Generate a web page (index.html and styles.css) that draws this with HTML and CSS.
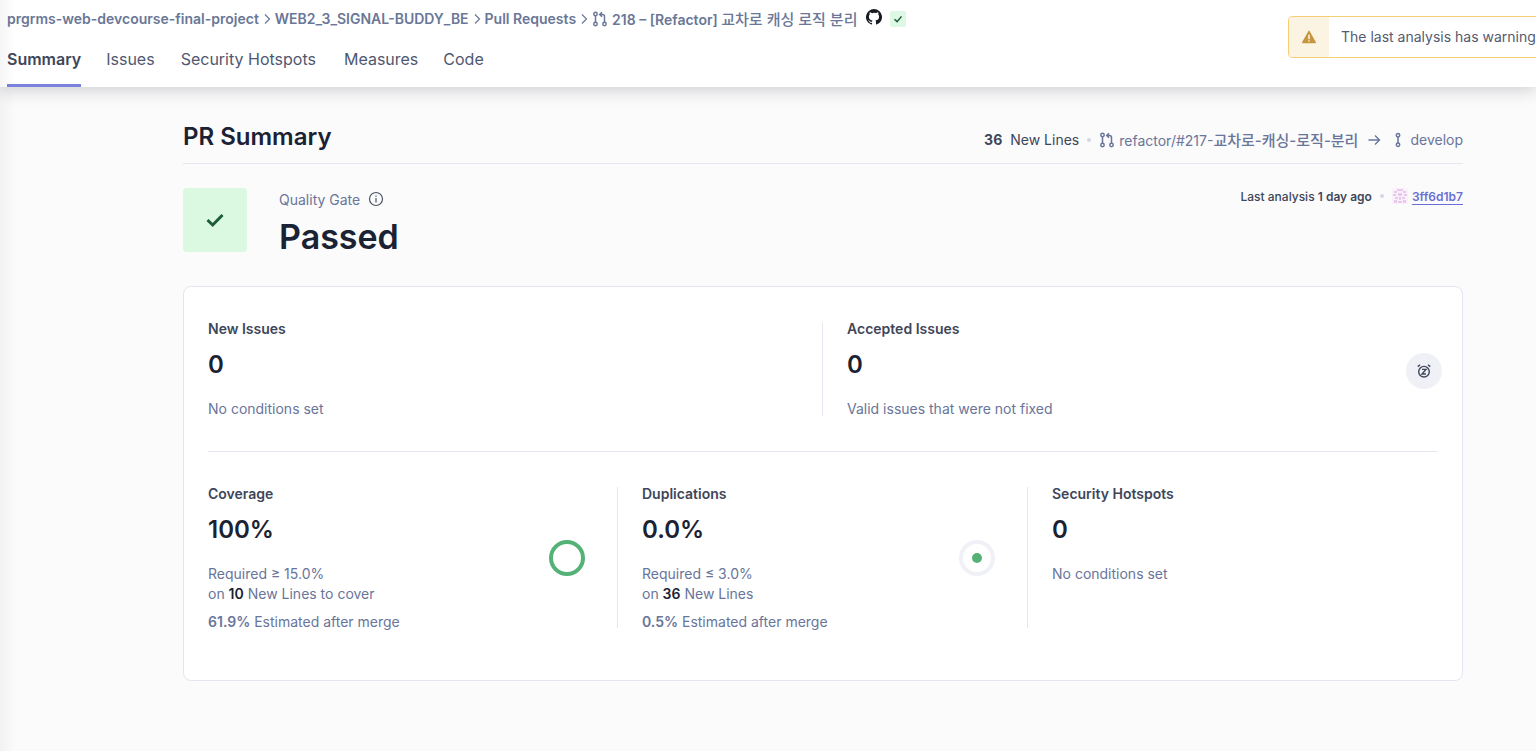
FILE: index.html
```html
<!DOCTYPE html>
<html lang="en">
<head>
<meta charset="utf-8">
<title>PR Summary</title>
<link rel="stylesheet" href="styles.css">
</head>
<body>
<header class="topbar">
  <nav class="crumbs">
    <span>prgrms-web-devcourse-final-project</span>
    <svg class="chev" viewBox="0 0 16 16"><path d="M6 3.5 10.5 8 6 12.5" fill="none" stroke="currentColor" stroke-width="1.2"/></svg>
    <span>WEB2_3_SIGNAL-BUDDY_BE</span>
    <svg class="chev" viewBox="0 0 16 16"><path d="M6 3.5 10.5 8 6 12.5" fill="none" stroke="currentColor" stroke-width="1.2"/></svg>
    <span>Pull Requests</span>
    <svg class="chev" viewBox="0 0 16 16"><path d="M6 3.5 10.5 8 6 12.5" fill="none" stroke="currentColor" stroke-width="1.2"/></svg>
    <svg class="pr" viewBox="0 0 16 16"><g fill="none" stroke="currentColor" stroke-width="1.5"><circle cx="3.5" cy="3" r="1.7"/><circle cx="3.5" cy="13" r="1.7"/><circle cx="12.5" cy="13" r="1.7"/><path d="M3.5 4.7v6.6M12.5 11.3V5.5a2 2 0 0 0-2-2H8M10 1.2 7.7 3.5 10 5.8"/></g></svg>
    <span>218 – [Refactor] <span class="ko">교차로 캐싱 로직 분리</span></span>
    <svg class="gh" viewBox="0 0 16 16"><path fill="#161b22" d="M8 0a8 8 0 0 0-2.53 15.59c.4.07.55-.17.55-.38v-1.34c-2.23.48-2.7-1.07-2.7-1.07-.36-.93-.89-1.17-.89-1.17-.73-.5.05-.49.05-.49.8.06 1.23.83 1.23.83.71 1.22 1.87.87 2.33.66.07-.52.28-.87.5-1.07-1.78-.2-3.64-.89-3.64-3.95 0-.87.31-1.59.82-2.15-.08-.2-.36-1.02.08-2.12 0 0 .67-.21 2.2.82A7.7 7.7 0 0 1 8 3.86c.68 0 1.36.09 2 .27 1.53-1.04 2.2-.82 2.2-.82.44 1.1.16 1.92.08 2.12.51.56.82 1.27.82 2.15 0 3.07-1.87 3.75-3.65 3.95.29.25.54.73.54 1.48v2.2c0 .21.15.46.55.38A8 8 0 0 0 8 0Z"/></svg>
    <span class="okbadge"><svg viewBox="0 0 16 16"><path d="M4 8.3 7 11l5-6" fill="none" stroke="#1d5c39" stroke-width="1.7"/></svg></span>
  </nav>
  <nav class="tabs">
    <a class="tab active">Summary</a>
    <a class="tab">Issues</a>
    <a class="tab">Security Hotspots</a>
    <a class="tab">Measures</a>
    <a class="tab">Code</a>
  </nav>
  <div class="warning">
    <span class="warn-ico"><svg viewBox="0 0 16 16"><path fill="#c6963f" stroke="#c6963f" stroke-width="1.2" stroke-linejoin="round" d="M8 2.2 14.4 13.6H1.6Z"/><path d="M8 5.8v4.4M8 11.2v1.4" stroke="#fbf4e2" stroke-width="1.6"/></svg></span>
    <span class="warn-text">The last analysis has warnings</span>
  </div>
</header>
<main class="page">
  <div class="head">
    <h1>PR Summary</h1>
    <div class="head-meta">
      <b>36</b><span class="new-lines">New Lines</span><i class="dot"></i>
      <svg class="pr" viewBox="0 0 16 16"><g fill="none" stroke="currentColor" stroke-width="1.5"><circle cx="3.5" cy="3" r="1.7"/><circle cx="3.5" cy="13" r="1.7"/><circle cx="12.5" cy="13" r="1.7"/><path d="M3.5 4.7v6.6M12.5 11.3V5.5a2 2 0 0 0-2-2H8M10 1.2 7.7 3.5 10 5.8"/></g></svg>
      <span>refactor/#217-<span class="ko">교차로-캐싱-로직-분리</span></span>
      <svg class="arrow" viewBox="0 0 16 16"><path d="M2.5 8h11M9 3.5 13.5 8 9 12.5" fill="none" stroke="currentColor" stroke-width="1.4"/></svg>
      <svg class="branch" viewBox="0 0 16 16"><g fill="none" stroke="currentColor" stroke-width="1.5"><circle cx="8" cy="3.2" r="1.7"/><circle cx="8" cy="12.8" r="1.7"/><path d="M8 4.9v6.2"/></g></svg>
      <span>develop</span>
    </div>
  </div>
  <section class="gate">
    <div class="gate-box"><svg viewBox="0 0 24 24"><path d="M4.5 12 9.7 17 19.5 7" fill="none" stroke="#1d5c39" stroke-width="3"/></svg></div>
    <div class="gate-text">
      <div class="gate-label">Quality Gate <svg viewBox="0 0 16 16"><g fill="none" stroke="#4b5563" stroke-width="1.2"><circle cx="8" cy="8" r="6.5"/><path d="M8 7v4.5M8 4.4v1.3"/></g></svg></div>
      <div class="gate-value">Passed</div>
    </div>
    <div class="analysis">
      <span>Last analysis <b>1 day ago</b></span><i class="dot"></i>
      <svg class="avatar" viewBox="0 0 16 16"><rect width="16" height="16" fill="#fbf1fb"/><path d="M5 1h6v2H5zM2 3h3v2H2zM11 3h3v2h-3zM1 6h3v2H1zM12 6h3v2h-3zM6 5h4v3H6zM3 9h3v2H3zM10 9h3v2h-3zM7 9h2v3H7zM2 12h3v3H2zM11 12h3v3h-3zM6 13h4v2H6z" fill="#e9c8ee"/></svg>
      <a>3ff6d1b7</a>
    </div>
  </section>
  <section class="card">
    <div class="row row-top">
      <div class="cell">
        <h2>New Issues</h2>
        <div class="num">0</div>
        <p>No conditions set</p>
      </div>
      <div class="cell cell-accepted">
        <h2>Accepted Issues</h2>
        <div class="num">0</div>
        <p>Valid issues that were not fixed</p>
        <span class="snooze"><svg viewBox="0 0 16 16"><g fill="none" stroke="#3e4659" stroke-width="1.4"><circle cx="8" cy="8.7" r="5.3"/><path d="M1.8 3.6 4 1.7M14.2 3.6 12 1.7M6 6.4h4L6 11h4"/></g></svg></span>
      </div>
    </div>
    <div class="row row-bottom">
      <div class="cell">
        <h2>Coverage</h2>
        <div class="num">100%</div>
        <p>Required ≥ 15.0%</p>
        <p>on <b>10</b> New Lines to cover</p>
        <p class="est"><em>61.9%</em> Estimated after merge</p>
        <svg class="gauge" viewBox="0 0 36 36"><circle cx="18" cy="18" r="16" fill="none" stroke="#55b276" stroke-width="4"/></svg>
      </div>
      <div class="cell">
        <h2>Duplications</h2>
        <div class="num">0.0%</div>
        <p>Required ≤ 3.0%</p>
        <p>on <b>36</b> New Lines</p>
        <p class="est"><em>0.5%</em> Estimated after merge</p>
        <svg class="gauge" viewBox="0 0 36 36"><circle cx="18" cy="18" r="16" fill="none" stroke="#f0f1f6" stroke-width="4"/><circle cx="18" cy="18" r="5" fill="#55b276"/></svg>
      </div>
      <div class="cell">
        <h2>Security Hotspots</h2>
        <div class="num">0</div>
        <p>No conditions set</p>
      </div>
    </div>
  </section>
</main>
</body>
</html>
```
FILE: styles.css
```css
* { box-sizing: border-box; }
html, body { margin: 0; height: 751px; overflow: hidden; }
body { background: #fbfbfb; font-family: Inter, "Noto Sans CJK KR", sans-serif; color: #1f2937; font-size: 14px; }
body::before { content: ""; position: absolute; left: 0; top: 0; bottom: 0; width: 16px; background: linear-gradient(to right, rgba(20,25,40,.04), rgba(20,25,40,0)); z-index: 2; pointer-events: none; }
svg { display: block; flex: none; }
.ko { font-size: 15px; font-weight: 500; }
.topbar { position: relative; height: 87px; background: #fff; box-shadow: 0 3px 16px rgba(20,25,40,.2); padding: 9px 7px 0; overflow: hidden; }
.crumbs { display: flex; align-items: center; height: 18px; color: #6a7797; font-weight: 600; font-size: 14px; white-space: nowrap; }
.crumbs .chev { width: 16px; height: 16px; margin-top: 1px; }
.crumbs .pr { width: 16px; height: 16px; margin: 2px 4px 0 0; }
.gh { width: 16px; height: 16px; margin: -2px 0 0 9px; }
.okbadge { width: 16px; height: 16px; background: #dff7e5; border-radius: 2px; margin: 2px 0 0 8px; padding: 1px; }
.okbadge svg { width: 14px; height: 14px; }
.tabs { display: flex; gap: 26px; margin-top: 13px; }
.tab { height: 47px; padding-top: 9px; font-size: 16px; color: #4f5870; border-bottom: 3px solid transparent; }
.tab:nth-child(2) { margin-left: -1px; }
.tab:nth-child(4) { margin-left: 2px; }
.tab:nth-child(5) { margin-left: -1px; }
.tab.active { font-weight: 600; color: #3e4659; border-bottom-color: #7b82dc; }
.warning { position: absolute; left: 1288px; top: 16px; width: 300px; height: 42px; display: flex; background: #fff; border: 1px solid #f5cf74; border-radius: 4px; }
.warn-ico { width: 40px; background: #fbf4e2; display: flex; align-items: center; justify-content: center; border-radius: 3px 0 0 3px; }
.warn-ico svg { width: 16px; height: 16px; }
.warn-text { flex: 1; padding-left: 12px; line-height: 40px; color: #555a70; }
.page { width: 1280px; margin-left: 183px; }
.head { display: flex; justify-content: space-between; align-items: center; height: 77px; padding-top: 23px; border-bottom: 1px solid #e6e7ee; }
h1 { margin: 0; font-size: 24px; font-weight: 600; color: #1a2233; }
.head-meta { display: flex; align-items: center; color: #69759a; font-size: 14px; padding-top: 6px; }
.head-meta b { color: #3e4659; margin-right: 8px; font-weight: 700; }
.head-meta .new-lines { color: #3e4659; }
.dot { width: 4px; height: 4px; border-radius: 50%; background: #d3d6e2; margin: 0 8px; display: block; }
.head-meta svg { width: 16px; height: 16px; }
.head-meta .pr { margin-right: 4px; }
.head-meta .arrow { margin: 0 8px; }
.head-meta .branch { margin-right: 4px; }
.gate { display: flex; margin-top: 24px; height: 64px; position: relative; }
.gate-box { width: 64px; height: 64px; background: #dbf8e1; border-radius: 4px; display: flex; align-items: center; justify-content: center; }
.gate-box svg { width: 24px; height: 24px; }
.gate-text { margin-left: 32px; }
.gate-label { display: flex; align-items: center; gap: 8px; color: #69759a; height: 24px; font-size: 14px; margin-top: -1px; }
.gate-label svg { width: 16px; height: 16px; }
.gate-value { font-size: 34px; font-weight: 600; color: #1a2233; line-height: 44px; margin-top: 4px; }
.analysis { margin-left: auto; display: flex; align-items: center; height: 18px; font-size: 12px; font-weight: 500; color: #3e4659; margin-top: -1px; }
.analysis b { font-weight: 600; }
.analysis .dot { margin: 0 8px; }
.avatar { width: 16px; height: 16px; margin-right: 4px; }
.analysis a { color: #6a6fd4; text-decoration: underline; text-underline-offset: 3px; font-weight: 600; }
.card { margin-top: 34px; height: 395px; background: #fff; border: 1px solid #e6e4f2; border-radius: 8px; padding: 0 24px; }
.row { display: grid; }
.row-top { grid-template-columns: 614px 616px; height: 165px; padding-top: 35px; border-bottom: 1px solid #e6e7ee; }
.row-bottom { grid-template-columns: 409px 410px 411px; padding-top: 35px; }
.cell { position: relative; }
.row-top .cell { height: 94px; }
.row-bottom .cell { height: 141px; }
.cell + .cell { border-left: 1px solid #e6e7ee; padding-left: 24px; }
h2 { margin: 0; font-size: 14px; line-height: 14px; font-weight: 600; color: #3e4659; }
.num { font-size: 24px; font-weight: 600; line-height: 28px; color: #1a2233; margin-top: 15px; }
.cell p { margin: 0; line-height: 20px; color: #69759a; }
.num + p { margin-top: 20px; }
.cell p b { color: #1a2233; font-weight: 600; }
.cell p.est { margin-top: 8px; }
.est em { font-style: normal; font-weight: 600; }
.gauge { position: absolute; width: 36px; height: 36px; top: 53px; right: 32px; }
.snooze { position: absolute; right: -4px; top: 31px; width: 36px; height: 36px; border-radius: 50%; background: #f0f1f6; display: flex; align-items: center; justify-content: center; }
.snooze svg { width: 16px; height: 16px; }
```
